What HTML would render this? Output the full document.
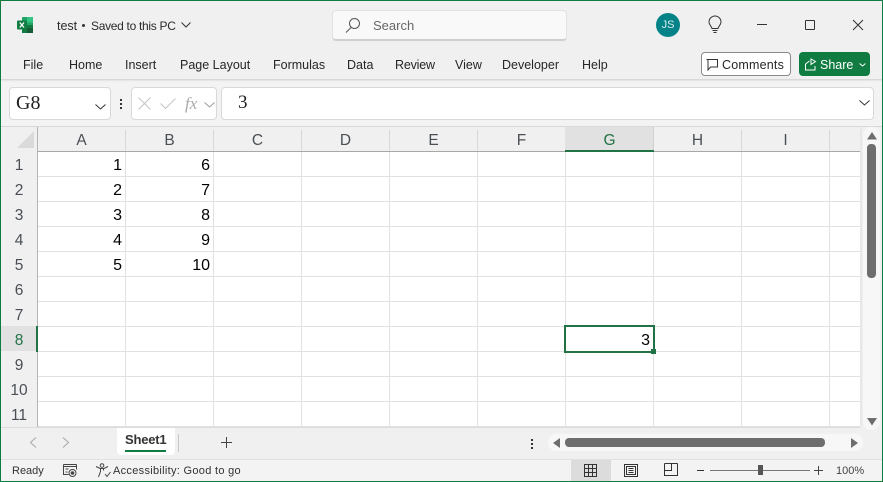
<!DOCTYPE html>
<html><head><meta charset="utf-8"><style>
html,body{margin:0;padding:0;width:883px;height:482px;overflow:hidden;background:#f0f0f0}
body{position:relative;font-family:"Liberation Sans",sans-serif;color:#2b2b2b}
.a{position:absolute;box-sizing:border-box}
.t{position:absolute;white-space:nowrap;font-size:12.5px;line-height:16px}
.rb{position:absolute;white-space:nowrap;font-size:12.5px;line-height:16px;top:57px;color:#262626}
.ch{position:absolute;top:127px;height:24px;width:87px;text-align:center;font-size:15.5px;line-height:27px;color:#4a4f55}
.rh{position:absolute;left:1px;width:36px;text-align:center;font-size:15.5px;line-height:27px;height:25px;color:#4a4f55}
.c{position:absolute;text-align:right;font-size:16px;line-height:27px;height:25px;color:#000;width:80px}
svg{position:absolute;overflow:visible}
</style></head><body>
<!-- ribbon background -->
<div class="a" style="left:0;top:0;width:883px;height:79px;background:#f0f0f0"></div>
<div class="a" style="left:0;top:79px;width:883px;height:48px;background:#f3f3f3;border-top:1px solid #d8d8d8;box-shadow:inset 0 1px 1px #e4e4e4"></div>

<!-- excel logo -->
<svg style="left:17px;top:17px" width="16" height="16" viewBox="0 0 16 16">
<rect x="5" y="0" width="11" height="16" rx="1" fill="#21a366"/>
<rect x="10" y="0" width="6" height="5.500" fill="#33c481"/>
<rect x="5" y="8" width="11" height="8" fill="#107c41"/>
<rect x="10" y="11" width="6" height="5" fill="#185c37"/>
<rect x="0" y="3.500" width="10" height="9" rx="1" fill="#107c41"/>
<path d="M2.800 5.500L7 10.500M7 5.500L2.800 10.500" stroke="#fff" stroke-width="1.300" fill="none"/>
</svg>
<div class="t" style="left:57px;top:18px">test</div>
<div class="a" style="left:82px;top:24px;width:3px;height:3px;background:#333;border-radius:2px"></div>
<div class="t" style="left:91px;top:18px;font-size:12px;letter-spacing:-.3px">Saved to this PC</div>
<svg style="left:181px;top:22px" width="10" height="6"><path d="M.5.500L5 5 9.500.500" stroke="#333" fill="none"/></svg>

<!-- search -->
<div class="a" style="left:332px;top:10px;width:235px;height:31px;background:#f9f9f9;border:1px solid #e2e2e2;border-bottom:2px solid #cfcfcf;border-radius:4px"></div>
<svg style="left:345px;top:17px" width="15" height="16" fill="none" stroke="#555"><circle cx="9.500" cy="6.500" r="5"/><path d="M6 10.500L1 15.500"/></svg>
<div class="t" style="left:373px;top:18px;color:#666;font-size:13px">Search</div>

<!-- user -->
<div class="a" style="left:656px;top:13px;width:24px;height:24px;border-radius:50%;background:#038387;color:#d8eeee;font-size:11px;line-height:24px;text-align:center">JS</div>
<svg style="left:708px;top:16px" width="14" height="18" fill="none" stroke="#333"><path d="M4 12.500C3.500 10 1 9 1 6a6 6 0 0 1 12 0c0 3-2.500 4-3 6.500z"/><path d="M4.500 14.500h5M5.500 16.500h3"/></svg>
<div class="a" style="left:757px;top:24px;width:10px;height:1px;background:#333"></div>
<div class="a" style="left:805px;top:20px;width:10px;height:10px;border:1.200px solid #333;border-radius:1px"></div>
<svg style="left:853px;top:20px" width="10" height="10"><path d="M0 0L10 10M10 0L0 10" stroke="#333" fill="none"/></svg>

<!-- ribbon tabs -->
<div class="rb" style="left:23px">File</div>
<div class="rb" style="left:69px">Home</div>
<div class="rb" style="left:125px">Insert</div>
<div class="rb" style="left:180px">Page Layout</div>
<div class="rb" style="left:273px">Formulas</div>
<div class="rb" style="left:347px">Data</div>
<div class="rb" style="left:395px;letter-spacing:-.2px">Review</div>
<div class="rb" style="left:455px">View</div>
<div class="rb" style="left:502px">Developer</div>
<div class="rb" style="left:582px">Help</div>

<!-- comments -->
<div class="a" style="left:701px;top:52px;width:90px;height:24px;background:#fff;border:1px solid #8a8a8a;border-radius:4px"></div>
<svg style="left:706px;top:59px" width="13" height="12" fill="none" stroke="#333"><path d="M.5.500h11v7.500H4.500L2 11V.5"/></svg>
<div class="t" style="left:722px;top:57px;color:#262626;letter-spacing:.2px">Comments</div>
<!-- share -->
<div class="a" style="left:799px;top:52px;width:71px;height:24px;background:#107c41;border-radius:4px"></div>
<svg style="left:804px;top:58px" width="13" height="13" fill="none" stroke="#fff"><path d="M1.500 6v6h9.500V8M1.500 6l4-3M7 1l4.500 2.500L7 6.500z"/></svg>
<div class="t" style="left:820px;top:57px;color:#fff;font-size:12.5px">Share</div>
<svg style="left:859px;top:63px" width="7" height="4"><path d="M.5.500L3.500 3 6.500.5" stroke="#fff" fill="none"/></svg>

<!-- formula bar -->
<div class="a" style="left:9px;top:87px;width:102px;height:33px;background:#fff;border:1px solid #d9d9d9;border-radius:4px"></div>
<div class="t" style="left:16px;top:92px;font-family:'Liberation Serif',serif;font-size:20px;line-height:22px;color:#222">G8</div>
<svg style="left:95px;top:104px" width="11" height="6"><path d="M.5.500L5.500 5 10.500.500" stroke="#333" fill="none"/></svg>
<div class="a" style="left:120px;top:99px;width:2px;height:2px;background:#333"></div>
<div class="a" style="left:120px;top:103px;width:2px;height:2px;background:#333"></div>
<div class="a" style="left:120px;top:107px;width:2px;height:2px;background:#333"></div>
<div class="a" style="left:131px;top:87px;width:86px;height:33px;background:#fff;border:1px solid #d9d9d9;border-radius:4px"></div>
<svg style="left:138px;top:97px" width="13" height="13"><path d="M.5.500L12.500 12.500M12.500.5L.5 12.500" stroke="#c4c4c4" fill="none"/></svg>
<svg style="left:160px;top:98px" width="16" height="11"><path d="M.5 5.500L5.500 10.500 15.500.5" stroke="#c4c4c4" fill="none"/></svg>
<div class="t" style="left:185px;top:94px;font-family:'Liberation Serif',serif;font-style:italic;font-size:17px;line-height:20px;color:#aaa">fx</div>
<svg style="left:204px;top:102px" width="11" height="6"><path d="M.5.500L5.500 5 10.500.500" stroke="#9a9a9a" fill="none"/></svg>
<div class="a" style="left:221px;top:87px;width:653px;height:33px;background:#fff;border:1px solid #d9d9d9;border-radius:4px"></div>
<div class="t" style="left:238px;top:92px;font-family:'Liberation Serif',serif;font-size:19px;line-height:22px;color:#222">3</div>
<svg style="left:859px;top:100px" width="11" height="6"><path d="M.5.500L5.500 5 10.500.500" stroke="#333" fill="none"/></svg>

<!-- grid headers -->
<div class="a" style="left:0;top:127px;width:883px;height:300px;background:#f0f0f0"></div>
<div class="a" style="left:0;top:126px;width:883px;height:1px;background:#d8d8d8"></div>
<svg style="left:17px;top:131px" width="18" height="18"><path d="M17 0V17H0z" fill="#dadada"/></svg>
<div class="a" style="left:565px;top:127px;width:89px;height:24px;background:#e1e1e1"></div>

<!-- cells -->
<div class="a" style="left:38px;top:152px;width:822px;height:275px;background:#fff;
background-image:repeating-linear-gradient(to bottom,transparent 0,transparent 24px,#e1e1e1 24px,#e1e1e1 25px),repeating-linear-gradient(to right,transparent 0,transparent 87px,#e1e1e1 87px,#e1e1e1 88px)"></div>

<!-- header dividers -->
<div class="a" style="left:37px;top:151px;width:823px;height:1px;background:#a8a8a8"></div>
<div class="a" style="left:37px;top:127px;width:1px;height:300px;background:#b4b4b4"></div>
<div class="a" style="left:125px;top:130px;width:1px;height:21px;background:#d8d8d8"></div>
<div class="a" style="left:213px;top:130px;width:1px;height:21px;background:#d8d8d8"></div>
<div class="a" style="left:301px;top:130px;width:1px;height:21px;background:#d8d8d8"></div>
<div class="a" style="left:389px;top:130px;width:1px;height:21px;background:#d8d8d8"></div>
<div class="a" style="left:477px;top:130px;width:1px;height:21px;background:#d8d8d8"></div>
<div class="a" style="left:653px;top:127px;width:1px;height:24px;background:#d0d0d0"></div>
<div class="a" style="left:741px;top:130px;width:1px;height:21px;background:#d8d8d8"></div>
<div class="a" style="left:829px;top:130px;width:1px;height:21px;background:#d8d8d8"></div>
<div class="a" style="left:565px;top:150px;width:89px;height:2px;background:#217346"></div>

<div class="ch" style="left:38px">A</div><div class="ch" style="left:126px">B</div><div class="ch" style="left:214px">C</div><div class="ch" style="left:302px">D</div><div class="ch" style="left:390px">E</div><div class="ch" style="left:478px">F</div><div class="ch" style="left:566px;color:#217346">G</div><div class="ch" style="left:654px">H</div><div class="ch" style="left:742px">I</div>

<!-- row headers -->
<div class="rh" style="top:152px">1</div><div class="rh" style="top:177px">2</div><div class="rh" style="top:202px">3</div><div class="rh" style="top:227px">4</div><div class="rh" style="top:252px">5</div><div class="rh" style="top:277px">6</div><div class="rh" style="top:302px">7</div>
<div class="a" style="left:1px;top:326px;width:37px;height:25px;background:#e1e1e1"></div>
<div class="a" style="left:36px;top:326px;width:2px;height:26px;background:#217346"></div>
<div class="rh" style="top:327px;color:#217346">8</div><div class="rh" style="top:352px">9</div><div class="rh" style="top:377px">10</div><div class="rh" style="top:402px">11</div>

<!-- data -->
<div class="c" style="left:42px;top:152px">1</div><div class="c" style="left:42px;top:177px">2</div><div class="c" style="left:42px;top:202px">3</div><div class="c" style="left:42px;top:227px">4</div><div class="c" style="left:42px;top:252px">5</div>
<div class="c" style="left:130px;top:152px">6</div><div class="c" style="left:130px;top:177px">7</div><div class="c" style="left:130px;top:202px">8</div><div class="c" style="left:130px;top:227px">9</div><div class="c" style="left:130px;top:252px">10</div>

<!-- selection -->
<div class="a" style="left:564px;top:325px;width:91px;height:28px;border:2px solid #217346"></div>
<div class="a" style="left:651px;top:349px;width:5px;height:5px;background:#217346"></div>
<div class="c" style="left:570px;top:327px">3</div>

<!-- vertical scrollbar -->
<div class="a" style="left:860px;top:127px;width:2px;height:300px;background:#e8e8e8"></div>
<div class="a" style="left:863px;top:127px;width:17px;height:303px;background:#f7f7f7;border-radius:8px"></div>
<svg style="left:867px;top:132px" width="10" height="8"><path d="M5 0L10 7.500H0z" fill="#6e6e6e"/></svg>
<div class="a" style="left:867px;top:144px;width:9px;height:134px;background:#6e6e6e;border-radius:4px"></div>
<svg style="left:867px;top:418px" width="10" height="8"><path d="M5 7.500L10 0H0z" fill="#6e6e6e"/></svg>

<!-- tabs bar -->
<div class="a" style="left:0;top:427px;width:860px;height:1px;background:#dcdcdc"></div>
<svg style="left:29px;top:437px" width="8" height="11"><path d="M7 .5L1.500 5.500 7 10.500" stroke="#a8a8a8" fill="none"/></svg>
<svg style="left:62px;top:437px" width="8" height="11"><path d="M1 .5L6.500 5.500 1 10.500" stroke="#a8a8a8" fill="none"/></svg>
<div class="a" style="left:117px;top:428px;width:58px;height:27px;background:#fff;border-radius:0 0 4px 4px"></div>
<div class="t" style="left:125px;top:432px;font-weight:bold;color:#333;font-size:13px;letter-spacing:-.2px">Sheet1</div>
<div class="a" style="left:125px;top:450px;width:41px;height:2px;background:#107c41"></div>
<div class="a" style="left:178px;top:434px;width:1px;height:18px;background:#c8c8c8"></div>
<svg style="left:221px;top:437px" width="11" height="11"><path d="M5.500 0V11M0 5.500H11" stroke="#444" fill="none"/></svg>
<div class="a" style="left:531px;top:439px;width:2px;height:2px;background:#333"></div>
<div class="a" style="left:531px;top:443px;width:2px;height:2px;background:#333"></div>
<div class="a" style="left:531px;top:447px;width:2px;height:2px;background:#333"></div>
<div class="a" style="left:548px;top:434px;width:315px;height:17px;background:#f7f7f7;border-radius:8px"></div>
<svg style="left:553px;top:438px" width="7" height="10"><path d="M0 5L7 0V10z" fill="#6e6e6e"/></svg>
<div class="a" style="left:565px;top:438px;width:260px;height:9px;background:#6e6e6e;border-radius:4px"></div>
<svg style="left:851px;top:438px" width="7" height="10"><path d="M7 5L0 0V10z" fill="#6e6e6e"/></svg>

<!-- status bar -->
<div class="a" style="left:0;top:459px;width:883px;height:23px;background:#f3f3f3;border-top:1px solid #e0e0e0"></div>
<div class="t" style="left:12px;top:463px;font-size:11px;color:#333">Ready</div>
<svg style="left:63px;top:464px" width="14" height="13" fill="none" stroke="#444"><path d="M.5.500h13M.5 2.500h13M.5.500v10h5M13.500.5v5"/><path d="M2.500 5h3M2.500 8h2"/><circle cx="9.500" cy="9" r="3.500"/><circle cx="9.500" cy="9" r="1.300" fill="#444"/></svg>
<svg style="left:95px;top:463px" width="16" height="15" fill="none" stroke="#444"><circle cx="7" cy="2.500" r="1.800"/><path d="M1 3.500l4 2h4l4-2M5.500 5.500v3l-2 5.500M8.500 5.500v2M10 11l2 2.500 3.500-4.500"/></svg>
<div class="t" style="left:113px;top:463px;font-size:11px;color:#333;letter-spacing:.3px">Accessibility: Good to go</div>
<div class="a" style="left:571px;top:460px;width:40px;height:21px;background:#dcdcdc"></div>
<svg style="left:584px;top:464px" width="13" height="13" fill="none" stroke="#333"><path d="M.5.500h12v12H.5zM.5 4.500h12M.5 8.500h12M4.500.5v12M8.500.5v12"/></svg>
<svg style="left:624px;top:464px" width="14" height="13" fill="none" stroke="#333"><path d="M.5.500h13v12H.5zM2.500 2.500h9v8h-9zM4.500 4.500h5M4.500 6.500h5M4.500 8.500h5"/></svg>
<svg style="left:664px;top:463px" width="14" height="13" fill="none" stroke="#333"><path d="M.5.500v12h13V.5M.5 7.500h7V.5h6M7.500.5H.5"/></svg>
<div class="a" style="left:697px;top:470px;width:7px;height:1px;background:#333"></div>
<div class="a" style="left:710px;top:470px;width:100px;height:1px;background:#777"></div>
<div class="a" style="left:758px;top:465px;width:5px;height:10px;background:#555"></div>
<svg style="left:814px;top:466px" width="9" height="9"><path d="M4.500 0V9M0 4.500H9" stroke="#444" fill="none"/></svg>
<div class="t" style="left:836px;top:463px;font-size:11px;color:#444">100%</div>

<!-- window border -->
<div class="a" style="left:0;top:0;width:883px;height:482px;border:1px solid #107c41"></div>
</body></html>
